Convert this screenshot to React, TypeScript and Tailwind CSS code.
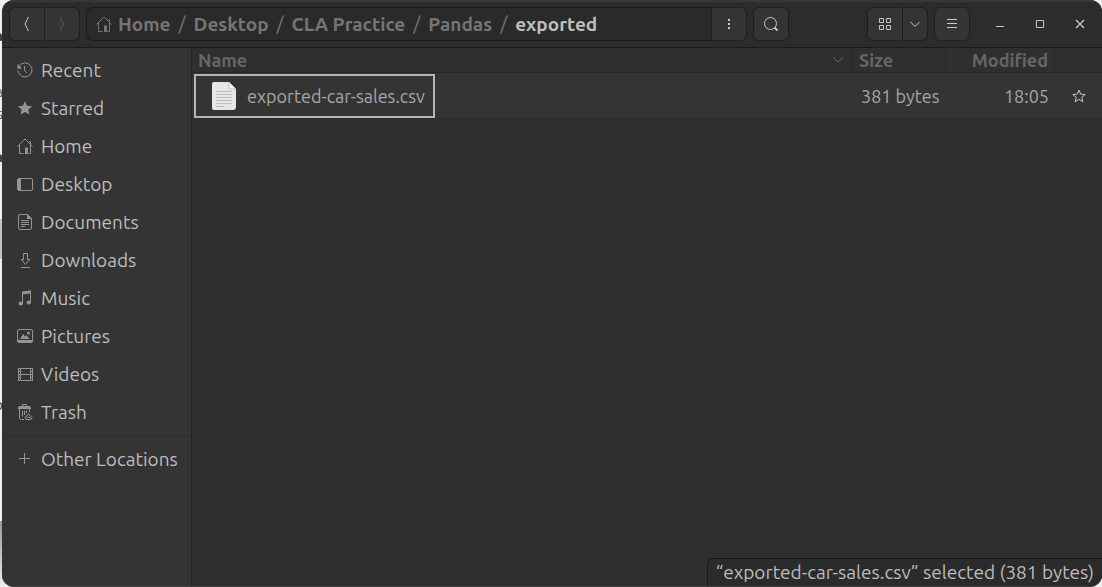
import type { ReactNode } from "react";

function Svg({ children, size = 16, className = "" }: { children: ReactNode; size?: number; className?: string }) {
  return (
    <svg
      width={size}
      height={size}
      viewBox={`0 0 ${size} ${size}`}
      fill="none"
      stroke="currentColor"
      strokeWidth="1"
      aria-hidden="true"
      className={`shrink-0 ${className}`}
    >
      {children}
    </svg>
  );
}

const HomeGlyph = () => (
  <Svg>
    <path d="M.5 8.500 8 1l7.500 7.500M2.500 7v8.500h4M13.500 7v8.500h-2M13.500 6V3.500h-1" />
    <path d="M8 9.500h3V16H8z" fill="currentColor" stroke="none" />
  </Svg>
);

const places: { name: string; icon: ReactNode }[] = [
  {
    name: "Recent",
    icon: (
      <Svg>
        <path d="M2.200 4A7 7 0 1 1 1 8.500M7.500 4v4.500L10 11" />
        <path d="M.5 2v4.500H5z" fill="currentColor" stroke="none" />
      </Svg>
    ),
  },
  {
    name: "Starred",
    icon: (
      <Svg>
        <path
          d="m8 1.200 2.100 4.600 5 .5-3.800 3.400 1.100 4.900L8 12.100l-4.400 2.500 1.100-4.900L.9 6.300l5-.5z"
          fill="currentColor"
          stroke="none"
        />
      </Svg>
    ),
  },
  { name: "Home", icon: <HomeGlyph /> },
  {
    name: "Desktop",
    icon: (
      <Svg>
        <rect x=".5" y="2.500" width="15" height="12" rx="1.500" />
        <path d="M1 3h3v11H1z" fill="currentColor" stroke="none" />
      </Svg>
    ),
  },
  {
    name: "Documents",
    icon: (
      <Svg>
        <path d="M3 .5h7.500l4 4V14A1.500 1.500 0 0 1 13 15.500H3A1.500 1.500 0 0 1 1.500 14V2A1.500 1.500 0 0 1 3 .5zM4 6.500h8M4 8.500h8M4 10.500h8M4 12.500h4" />
        <path d="M10 0v5h5z" fill="currentColor" stroke="none" />
      </Svg>
    ),
  },
  {
    name: "Downloads",
    icon: (
      <Svg>
        <path d="M6.500 1.500h4v6h2.200l-4.200 5-4.200-5h2.200zM4 15.500h9" />
      </Svg>
    ),
  },
  {
    name: "Music",
    icon: (
      <Svg>
        <path d="M5.500 13V2l8-1v11" />
        <path d="M5 1.800 14 .5v3L5 4.500z" fill="currentColor" stroke="none" />
        <ellipse cx="3.800" cy="13.500" rx="2.200" ry="1.900" fill="currentColor" stroke="none" />
        <ellipse cx="11.800" cy="12.500" rx="2.200" ry="1.900" fill="currentColor" stroke="none" />
      </Svg>
    ),
  },
  {
    name: "Pictures",
    icon: (
      <Svg>
        <rect x=".5" y="1.500" width="15" height="13" rx="1.500" />
        <path d="M1 12h14v2.500H1zM3 11l3-5 2 2.500L9.500 7l3 4z" fill="currentColor" stroke="none" />
        <circle cx="11.500" cy="5" r="1.500" fill="currentColor" stroke="none" />
      </Svg>
    ),
  },
  {
    name: "Videos",
    icon: (
      <Svg>
        <path d="M3.500 2.500h10v12h-10zM3.500 8.500h10" />
        <path d="M1.500 2v13M15.500 2v13" />
        <path d="M2.500 2v13M14.500 2v13" strokeDasharray="1 2" />
      </Svg>
    ),
  },
  {
    name: "Trash",
    icon: (
      <Svg>
        <path d="M5.500 2.500v-2h4v2M2.500 5v8.500a2 2 0 0 0 2 2H7M5.500 6.500v6M7.500 6.500V11M9.500 6.500V9M12.500 5v3" />
        <path d="M1 3.500 2.500 2h10L14 3.500V5H1z" fill="currentColor" stroke="none" />
        <path d="M11.500 9.500 13 11.500 15 13.500 14 15.500H9l-1-2 2-1.500zM10 13.500h3.500" />
      </Svg>
    ),
  },
];

const crumbs = ["Desktop", "CLA Practice", "Pandas", "exported"];

const button = "flex h-[34px] items-center justify-center border-[#1f1f1f] bg-[#343434]";

function Header() {
  return (
    <header className="flex h-12 shrink-0 items-start border-t-2 border-b border-t-[#393939] border-b-[#191919] bg-[#2c2c2c] pt-[5px] pr-0.5 pl-[7px] text-[#c6c6c6]">
      <nav className="mr-1.5 flex" aria-label="History">
        <button aria-label="Back" className={`${button} w-9 rounded-l-md border`}>
          <Svg><path d="M9.500 1 6 8l3.500 7" /></Svg>
        </button>
        <button aria-label="Forward" disabled className={`${button} w-[35px] rounded-r-md border border-l-0 text-[#5c5c5c]`}>
          <Svg><path d="M6 1l3.500 7L6 15" /></Svg>
        </button>
      </nav>

      <nav
        aria-label="Path"
        className="flex h-[34px] max-w-[625px] min-w-0 flex-1 items-center overflow-hidden rounded-l-md border border-r-0 border-[#1b1b1b] bg-[#2a2a2a] pl-[9px] text-[19px] leading-6 font-bold whitespace-nowrap text-[#757575]"
      >
        <a href="#home" className="flex items-center gap-1.5">
          <HomeGlyph />
          Home
        </a>
        {crumbs.map((crumb, i) => (
          <span key={crumb} className="flex items-center">
            <span className="w-[23px] text-center font-normal">/</span>
            <a href={`#${crumb}`} className={i === crumbs.length - 1 ? "text-[#bdbdbd]" : ""}>
              {crumb}
            </a>
          </span>
        ))}
      </nav>
      <button aria-label="Folder menu" className={`${button} mr-1.5 w-9 rounded-r-md border`}>
        <Svg><path d="M7 3h2v2H7zM7 7h2v2H7zM7 11h2v2H7z" fill="currentColor" stroke="none" /></Svg>
      </button>
      <button aria-label="Search" className={`${button} w-9 rounded-md border`}>
        <Svg>
          <circle cx="7.500" cy="7.500" r="6" />
          <path d="m11.500 11.500 3 3" strokeWidth="2" />
        </Svg>
      </button>

      <div className="ml-auto flex">
        <button aria-label="Grid view" className={`${button} w-9 rounded-l-md border`}>
          <Svg><path d="M2.500 2.500h4v4h-4zM9.500 2.500h4v4h-4zM2.500 9.500h4v4h-4zM9.500 9.500h4v4h-4z" /></Svg>
        </button>
        <button aria-label="View options" className={`${button} mr-1.5 w-[25px] rounded-r-md border border-l-0`}>
          <Svg><path d="m3.500 6 4.500 4.500L12.500 6" /></Svg>
        </button>
        <button aria-label="Main menu" className={`${button} mr-2.5 w-9 rounded-md border`}>
          <Svg><path d="M3 3.500h10M3 7.500h10M3 11.500h10" /></Svg>
        </button>
        <button aria-label="Minimize" className="flex w-10 items-center justify-center">
          <Svg><path d="M4 10.500h8" /></Svg>
        </button>
        <button aria-label="Maximize" className="flex w-10 items-center justify-center">
          <Svg><path d="M4.500 4.500h7v7h-7z" /></Svg>
        </button>
        <button aria-label="Close" className="flex w-10 items-center justify-center">
          <Svg><path d="m4 4 8 8M12 4l-8 8" strokeWidth="1.300" /></Svg>
        </button>
      </div>
    </header>
  );
}

function Sidebar() {
  const row = "flex h-[38px] items-center gap-2 pl-[15px] whitespace-nowrap";
  return (
    <aside className="w-[190px] shrink-0 border-r border-[#262626] bg-[#343434] pt-[3px] text-[19px] leading-6 text-[#bcbcbc]">
      <ul>
        {places.map((place) => (
          <li key={place.name}>
            <a href={`#${place.name}`} className={row}>
              <span className="text-[#949494]">{place.icon}</span>
              {place.name}
            </a>
          </li>
        ))}
      </ul>
      <hr className="my-1 border-[#2d2d2d]" />
      <a href="#other" className={row}>
        <span className="text-[#949494]">
          <Svg><path d="M2 7.500h11M7.500 2v11" /></Svg>
        </span>
        Other Locations
      </a>
    </aside>
  );
}

function FileIcon() {
  return (
    <svg width="26" height="30" viewBox="0 0 26 30" aria-hidden="true" className="shrink-0">
      <path d="M3 1h15l7 7v18a3 3 0 0 1-3 3H3a2 2 0 0 1-2-2V3a2 2 0 0 1 2-2z" fill="#e6e6e6" />
      <path d="M18 1v5a2 2 0 0 0 2 2h5z" fill="#f6f6f6" stroke="#aaa" strokeWidth=".7" />
      <path d="M5 10.500h16M5 13.500h16M5 16.500h16M5 19.500h16M5 22.500h16M5 25.500h8" stroke="#bdbdbd" />
    </svg>
  );
}

function Files() {
  const th = "h-[25px] border-b border-[#272727] p-0 font-bold";
  return (
    <main className="relative min-w-0 flex-1 bg-[#2f2f2f] text-[18px] leading-6 text-[#a6a6a6]">
      <table className="w-full table-fixed border-separate border-spacing-0 text-left whitespace-nowrap">
        <colgroup>
          <col />
          <col className="w-[93px]" />
          <col className="w-[109px]" />
          <col className="w-[47px]" />
        </colgroup>
        <thead className="text-[#656565]">
          <tr>
            <th className={`${th} border-r`}>
              <div className="flex items-center justify-between pr-1.5 pl-1.5">
                Name
                <Svg><path d="m3 5.500 5 4.500 5-4.500" /></Svg>
              </div>
            </th>
            <th className={`${th} border-r`}>
              <div className="pl-1.5">Size</div>
            </th>
            <th className={`${th} border-r text-right`}>
              <div className="pr-1.5">Modified</div>
            </th>
            <th className={th} aria-label="Starred" />
          </tr>
        </thead>
        <tbody className="bg-[#343434]">
          <tr>
            <td className="h-[45px] p-0 pl-0.5">
              <div className="flex h-11 w-[241px] items-center gap-2.5 border-2 border-[#b5b5b5] pl-[15px]">
                <FileIcon />
                exported-car-sales.csv
              </div>
            </td>
            <td className="p-0 pl-2">381 bytes</td>
            <td className="p-0 pr-1.5 text-right">18:05</td>
            <td className="p-0">
              <button aria-label="Star file" className="ml-4 flex text-[#c6c6c6]">
                <Svg>
                  <path d="m8 2 1.700 4.200 4.500.3-3.500 2.900 1.200 4.400L8 11.400l-3.900 2.400 1.200-4.400L1.800 6.500l4.500-.3z" />
                </Svg>
              </button>
            </td>
          </tr>
        </tbody>
      </table>
      <div
        role="status"
        className="absolute right-0 bottom-0 h-[28px] rounded-tl-md border-t border-l border-[#191919] bg-[#2b2b2b] px-2 text-[19px] leading-[26px] whitespace-nowrap text-[#bcbcbc]"
      >
        “exported-car-sales.csv” selected (381 bytes)
      </div>
    </main>
  );
}

function Backdrop() {
  const scrap = "absolute right-0 text-[15px] leading-5";
  return (
    <div aria-hidden="true" className="absolute inset-y-0 left-0 w-[3px] overflow-hidden">
      <div className="absolute top-[219px] h-[40px] w-full bg-[#c4c4c4]" />
      <div className="absolute top-[521px] bottom-0 w-full bg-linear-to-b from-[#999] to-[#f0f0f0]" />
      <span className={`${scrap} top-[26px] font-bold text-[#333]`}>a</span>
      <span className={`${scrap} top-[82px] text-[#2d7d76]`}>a</span>
      <span className={`${scrap} top-[104px] text-[#1769c0]`}>s</span>
      <span className={`${scrap} top-[147px] font-bold text-[#333]`}>a</span>
      <span className={`${scrap} top-[395px] text-[#333]`}>o</span>
    </div>
  );
}

export default function App() {
  return (
    <div className="relative flex h-screen bg-[#efefef] pl-[2px] font-['Ubuntu','Noto_Sans',sans-serif]">
      <Backdrop />
      <div className="relative flex min-w-0 flex-1 flex-col overflow-hidden rounded-xl border-b border-[#404040] bg-[#2f2f2f]">
        <Header />
        <div className="flex min-h-0 flex-1">
          <Sidebar />
          <Files />
        </div>
      </div>
    </div>
  );
}
